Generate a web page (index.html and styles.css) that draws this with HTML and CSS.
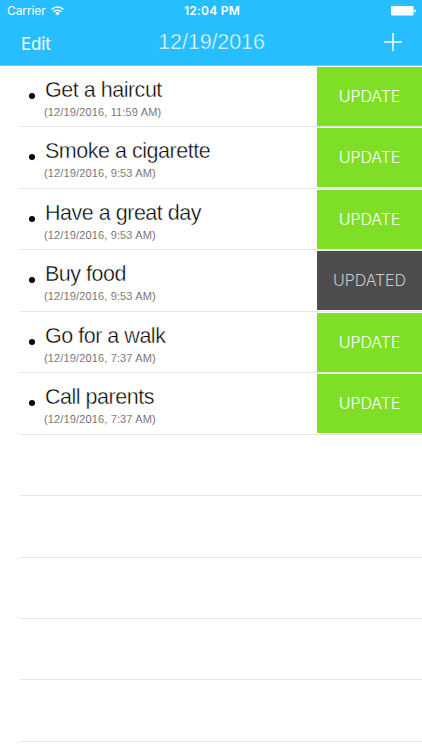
FILE: index.html
```html
<!DOCTYPE html>
<html lang="en">
<head>
<meta charset="utf-8">
<title>12/19/2016</title>
<link rel="stylesheet" href="styles.css">
</head>
<body>
<header class="header">
  <div class="status">
    <div class="carrier"><span>Carrier</span>
      <svg class="wifi" width="13" height="10" viewBox="0 0 13 10" fill="none" stroke="#fff" stroke-width="1.6"><path d="M.6 3.5a8.3 8.3 0 0 1 11.8 0M2.7 5.8a5.3 5.3 0 0 1 7.6 0"/><path d="M6.5 9.5 4.3 7.3a3 3 0 0 1 4.4 0z" fill="#fff" stroke="none"/></svg>
    </div>
    <span class="clock">12:04 PM</span>
    <svg class="battery" width="26" height="10" viewBox="0 0 26 10" fill="#fff"><rect width="22.6" height="9.6" rx="1.3"/><path d="M23.4 3.2q1.6.3 1.6 1.7t-1.6 1.7z"/></svg>
  </div>
  <nav class="nav">
    <span class="edit">Edit</span>
    <h1 class="title">12/19/2016</h1>
    <svg class="add" width="18" height="18" viewBox="0 0 18 18" stroke="#fff" stroke-width="1.5"><path d="M9 0v18M0 9h18"/></svg>
  </nav>
</header>
<main class="list">
  <div class="row"><i class="dot"></i><div class="item"><div class="name">Get a haircut</div><div class="date">(12/19/2016, 11:59 AM)</div></div><div class="button">UPDATE</div></div>
  <div class="row"><i class="dot"></i><div class="item"><div class="name">Smoke a cigarette</div><div class="date">(12/19/2016, 9:53 AM)</div></div><div class="button">UPDATE</div></div>
  <div class="row"><i class="dot"></i><div class="item"><div class="name">Have a great day</div><div class="date">(12/19/2016, 9:53 AM)</div></div><div class="button">UPDATE</div></div>
  <div class="row"><i class="dot"></i><div class="item"><div class="name">Buy food</div><div class="date">(12/19/2016, 9:53 AM)</div></div><div class="button done">UPDATED</div></div>
  <div class="row"><i class="dot"></i><div class="item"><div class="name">Go for a walk</div><div class="date">(12/19/2016, 7:37 AM)</div></div><div class="button">UPDATE</div></div>
  <div class="row"><i class="dot"></i><div class="item"><div class="name">Call parents</div><div class="date">(12/19/2016, 7:37 AM)</div></div><div class="button">UPDATE</div></div>
  <div class="row"></div>
  <div class="row"></div>
  <div class="row"></div>
  <div class="row"></div>
  <div class="row"></div>
</main>
</body>
</html>
```
FILE: styles.css
```css
* { box-sizing: border-box; }
body { margin: 0; height: 750px; overflow: hidden; background: #fff; font-family: "Liberation Sans", sans-serif; }
.header { height: 66px; background: #26beff; color: #fff; border-bottom: 1px solid #70cef4; }
.status { display: grid; grid-template-columns: 1fr auto 1fr; align-items: center; height: 22px; padding: 0 5px 0 7px; font: 400 12px/22px Inter, sans-serif; }
.carrier { display: flex; align-items: center; gap: 5px; letter-spacing: -.1px; }
.clock { font-weight: 600; letter-spacing: .25px; }
.battery { justify-self: end; }
.nav { display: grid; grid-template-columns: 1fr auto 1fr; align-items: center; height: 40px; padding: 0 20px 0 21px; }
.edit { font: 400 17px/20px Inter, sans-serif; letter-spacing: -.2px; padding-top: 3px; }
.title { margin: 0; font-size: 21.5px; line-height: 24px; font-weight: 400; letter-spacing: -.1px; -webkit-text-stroke: .5px #26beff; }
.add { justify-self: end; }
.list { display: flex; flex-direction: column; }
.row { position: relative; flex: none; display: flex; height: 61.45px; padding-left: 29px; }
.row::after { content: ""; position: absolute; left: 20px; right: 0; bottom: 0; height: 1px; background: #e6e6e8; }
.dot { width: 6px; height: 6px; margin-top: 27px; border-radius: 50%; background: #000; }
.item { flex: 1; padding: 12px 0 0 9px; white-space: nowrap; }
.name { padding-left: 1px; font-size: 21.5px; line-height: 24px; letter-spacing: -.48px; color: #000; -webkit-text-stroke: .4px #fff; }
.date { margin-top: 4px; font-size: 11px; line-height: 13px; letter-spacing: .14px; color: #555; -webkit-text-stroke: .15px #fff; }
.button { width: 105px; height: 59px; margin-top: 1px; background: #7fdf27; color: #fff; font: 300 16px/59px Inter, sans-serif; letter-spacing: -.1px; text-align: center; }
.done { background: #4d4d4d; color: #c8c8c8; }
```
